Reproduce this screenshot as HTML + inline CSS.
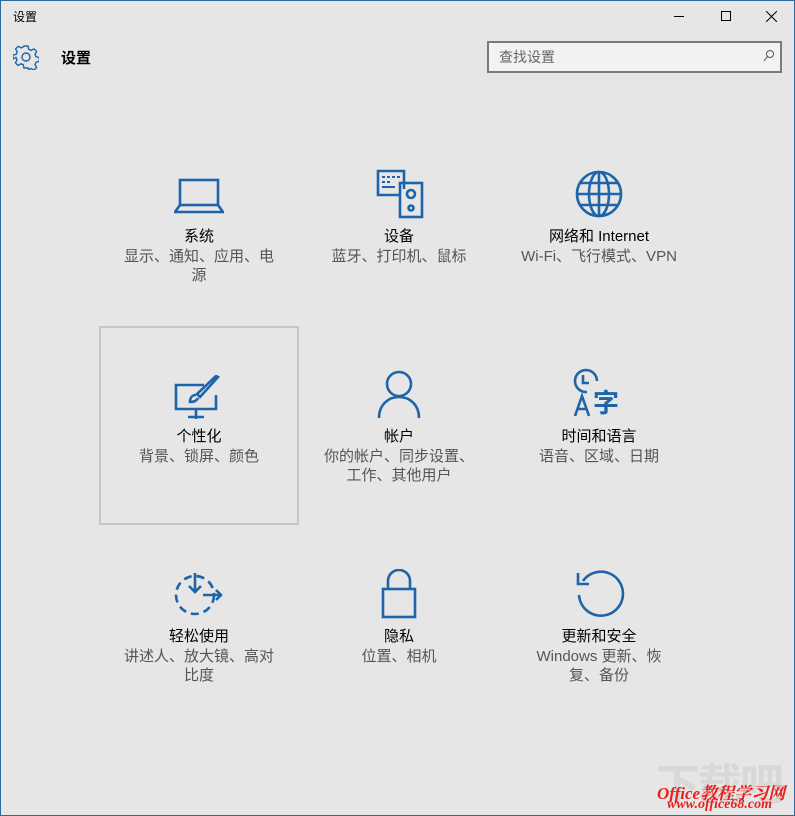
<!DOCTYPE html>
<html><head><meta charset="utf-8"><style>
*{margin:0;padding:0;box-sizing:border-box}
body{width:795px;height:816px;background:#e6e6e6;font-family:"Liberation Sans","Noto Sans CJK SC",sans-serif;position:relative;overflow:hidden;border:1px solid #2d6aa0}
.a{position:absolute}
.t{position:absolute;width:200px;text-align:center;font-size:15px;color:#000;line-height:19px}
.s{position:absolute;width:160px;text-align:center;font-size:15px;color:#555;line-height:19px}
svg{position:absolute}
</style></head><body>
<div class="a" style="left:12px;top:7px;font-size:12px;color:#000">设置</div>
<div class="a" style="left:673px;top:15px;width:10px;height:1px;background:#000"></div>
<div class="a" style="left:720px;top:10px;width:10px;height:10px;border:1px solid #000"></div>
<svg style="left:765px;top:10px" width="11" height="11" viewBox="0 0 11 11"><path d="M0 0L11 11M11 0L0 11" stroke="#000" stroke-width="1"/></svg>
<svg style="left:12px;top:43px" width="26" height="26" viewBox="0 0 26 26"><g fill="none" stroke="#1e64a8" stroke-width="1.4"><circle cx="13" cy="13" r="4"/><path d="M11 2h4l.7 3.2 2.3 1.2 3-1.6 2.6 2.6-1.6 3 1 2.4 3.2.7v4l-3.2.7-1 2.3 1.6 3-2.6 2.6-3-1.6-2.3 1L15 24h-4l-.7-3.2-2.3-1-3 1.6-2.6-2.6 1.6-3-1-2.3L0 15v-4l3.2-.7 1-2.4-1.6-3L5.2 2.3l3 1.6 2.3-1.2z"/></g></svg>
<div class="a" style="left:60px;top:46px;font-size:15px;font-weight:bold">设置</div>
<div class="a" style="left:486px;top:40px;width:295px;height:32px;border:2px solid #7a7a7a;background:#f2f2f2"></div>
<div class="a" style="left:498px;top:46px;font-size:14px;color:#666">查找设置</div>
<svg style="left:762px;top:48px" width="12" height="14" viewBox="0 0 12 14"><circle cx="7" cy="5" r="3.5" fill="none" stroke="#555"/><path d="M4.5 7.5L1 12" stroke="#555"/></svg>

<svg style="left:173px;top:176px" width="50" height="38" viewBox="0 0 50 38"><g fill="none" stroke="#1e64a8" stroke-width="2.6"><rect x="6" y="3" width="38" height="25"/><path d="M6 28L1 35h48l-5-7"/></g></svg>
<svg style="left:375px;top:168px" width="48" height="50" viewBox="0 0 48 50"><g fill="none" stroke="#1e64a8" stroke-width="2.6"><path d="M28 20V2H2v24h22"/><rect x="24" y="14" width="22" height="34"/><circle cx="35" cy="25" r="4"/><circle cx="35" cy="39" r="2.5"/></g><g fill="#1e64a8"><rect x="6" y="7" width="3" height="2"/><rect x="11" y="7" width="3" height="2"/><rect x="16" y="7" width="3" height="2"/><rect x="21" y="7" width="3" height="2"/><rect x="6" y="12" width="3" height="2"/><rect x="11" y="12" width="3" height="2"/><rect x="6" y="17" width="13" height="2"/></g></svg>
<svg style="left:573px;top:168px" width="50" height="50" viewBox="0 0 50 50"><g fill="none" stroke="#1e64a8" stroke-width="2.6"><circle cx="25" cy="25" r="22"/><ellipse cx="25" cy="25" rx="10" ry="22"/><path d="M25 3v44M3 25h44M7 14h36M7 36h36"/></g></svg>

<div class="t" style="left:98px;top:226px">系统</div>
<div class="s" style="left:118px;top:246px">显示、通知、应用、电<br>源</div>
<div class="t" style="left:298px;top:226px">设备</div>
<div class="s" style="left:318px;top:246px">蓝牙、打印机、鼠标</div>
<div class="t" style="left:498px;top:226px">网络和 Internet</div>
<div class="s" style="left:500px;top:246px;width:196px">Wi-Fi、飞行模式、VPN</div>

<div class="a" style="left:98px;top:325px;width:200px;height:199px;border:2px solid #c6c6c6"></div>
<svg style="left:173px;top:374px" width="48" height="44" viewBox="0 0 48 44"><g fill="none" stroke="#1e64a8" stroke-width="2.6"><path d="M30 10H2v24h40V20"/><path d="M22 44V34M14 42h16"/><path d="M44 2L26 22l-3-3L42 1z"/><path d="M22 20c-4 0-6 3-6 7 3 0 7-1 8-4"/></g></svg>
<svg style="left:376px;top:368px" width="44" height="50" viewBox="0 0 44 50"><g fill="none" stroke="#1e64a8" stroke-width="2.6"><circle cx="22" cy="15" r="12"/><path d="M2 49c0-13 9-21 20-21s20 8 20 21"/></g></svg>
<svg style="left:572px;top:367px" width="52" height="50" viewBox="0 0 52 50"><g fill="none" stroke="#1e64a8" stroke-width="2.6"><path d="M14 24A11 11 0 1 1 24 13"/><path d="M10 7v8h6"/><path d="M2 48l7-20 7 20M5 41h8"/></g><text x="20" y="44" font-size="26" fill="#1e64a8" font-family="Noto Sans CJK SC" font-weight="bold">字</text></svg>

<div class="t" style="left:98px;top:426px">个性化</div>
<div class="s" style="left:118px;top:446px">背景、锁屏、颜色</div>
<div class="t" style="left:298px;top:426px">帐户</div>
<div class="s" style="left:313px;top:446px;width:170px">你的帐户、同步设置、<br>工作、其他用户</div>
<div class="t" style="left:498px;top:426px">时间和语言</div>
<div class="s" style="left:518px;top:446px">语音、区域、日期</div>

<svg style="left:170px;top:570px" width="54" height="46" viewBox="0 0 54 46"><g fill="none" stroke="#1e64a8" stroke-width="2.6"><circle cx="24" cy="24" r="19" stroke-dasharray="8 5"/><path d="M24 2v18M18 15l6 6 6-6M32 24h18M45 19l5 5-5 5"/></g></svg>
<svg style="left:380px;top:568px" width="36" height="50" viewBox="0 0 36 50"><g fill="none" stroke="#1e64a8" stroke-width="2.6"><rect x="2" y="20" width="32" height="28"/><path d="M7 20V12a11 11 0 0 1 22 0v8"/></g></svg>
<svg style="left:573px;top:568px" width="52" height="50" viewBox="0 0 52 50"><g fill="none" stroke="#1e64a8" stroke-width="2.6"><path d="M9 12A22 22 0 1 1 5 26"/><path d="M4 4v11h11"/></g></svg>

<div class="t" style="left:98px;top:626px">轻松使用</div>
<div class="s" style="left:118px;top:646px">讲述人、放大镜、高对<br>比度</div>
<div class="t" style="left:298px;top:626px">隐私</div>
<div class="s" style="left:318px;top:646px">位置、相机</div>
<div class="t" style="left:498px;top:626px">更新和安全</div>
<div class="s" style="left:513px;top:646px;width:170px">Windows 更新、恢<br>复、备份</div>

<div class="a" style="left:655px;top:755px;font-size:44px;color:#d8d8d8;font-weight:bold;letter-spacing:-2px;font-family:'Noto Sans CJK SC',sans-serif;line-height:50px">下载吧</div>
<div class="a" style="left:656px;top:778px;font-size:17px;color:#e8201c;font-style:italic;font-weight:bold;font-family:'Liberation Serif','Noto Serif CJK SC',serif">Office教程学习网</div>
<div class="a" style="left:666px;top:796px;font-size:14px;color:#e8201c;font-style:italic;font-weight:bold;font-family:'Liberation Serif',serif">www.office68.com</div>
</body></html>
